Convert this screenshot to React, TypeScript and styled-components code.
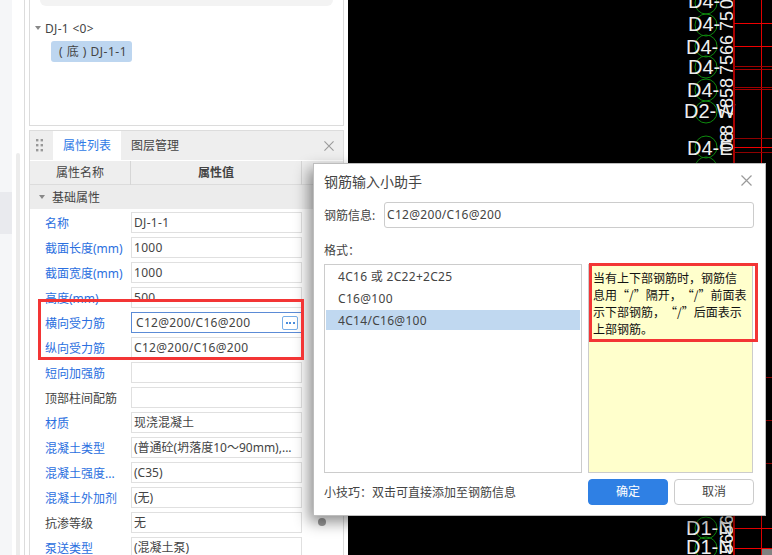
import React from "react";
import styled, { createGlobalStyle } from "styled-components";

const Global = createGlobalStyle`
  html, body { margin: 0; padding: 0; background: #fff; }
  * { box-sizing: border-box; }
  body { font-family: "Noto Sans", "Noto Sans CJK SC", "Liberation Sans", sans-serif; font-size: 12px; color: #333; }
`;

const Page = styled.div`
  position: relative; width: 772px; height: 555px; overflow: hidden; display: flex; background: #fff;
`;
const Sidebar = styled.div`
  width: 25px; flex: none; display: flex; border-right: 1px solid #dcdcdc;
`;
const Rail = styled.div`
  width: 12px; background: #f5f6f8; padding-top: 192px;
`;
const RailBand = styled.div`
  height: 42px; background: #e9eaee;
`;
const ScrollTrack = styled.div`
  width: 12px; padding: 153px 0 0 4px;
`;
const ScrollThumb = styled.div`
  width: 4px; height: 402px; background: #ececec; border-radius: 2px 2px 0 0;
`;
const Middle = styled.div`
  width: 323px; flex: none; padding: 0 4px 0 4px; display: flex; flex-direction: column;
`;
const TreePanel = styled.div`
  height: 126px; flex: none; border: 1px solid #dcdcdc; border-top: none; padding: 0 10px;
`;
const SearchPill = styled.div`
  height: 6px; background: #f3f3f3; border-radius: 0 0 10px 10px;
`;
const TreeHead = styled.div`
  display: flex; align-items: center; gap: 3px; margin: 14px 0 0 -5px; height: 16px; font-size: 12px; color: #444;
  letter-spacing: 0.3px;
`;
const Caret = styled.span`
  width: 0; height: 0; border-left: 3.5px solid transparent; border-right: 3.5px solid transparent;
  border-top: 4px solid #888; margin-right: 1px;
`;
const TreeItem = styled.div`
  margin: 5px 0 0 11px; width: 81px; height: 21px; line-height: 21px; background: #bdd6f0; border-radius: 3px;
  padding-left: 8px; font-size: 12px; color: #444; white-space: nowrap; letter-spacing: 0.5px;
`;
const AttrPanel = styled.div`
  margin-top: 4px; flex: 1; min-height: 0; border: 1px solid #dcdcdc; border-bottom: none; overflow: hidden;
`;
const TabBar = styled.div`
  height: 29px; background: #eeeeee; display: flex; align-items: stretch; position: relative;
`;
const Grip = styled.svg`
  width: 7px; height: 14px; align-self: center; margin: 0 10px 0 6px; flex: none;
`;
const Tab = styled.div<{ $active?: boolean }>`
  width: 68px; text-align: center; line-height: 29px; font-size: 12px;
  background: ${(p) => (p.$active ? "#fff" : "transparent")};
  color: ${(p) => (p.$active ? "#2e7ae6" : "#444")};
`;
const PanelClose = styled.svg`
  width: 10px; height: 10px; align-self: center; margin-left: auto; margin-right: 9px; flex: none;
`;
const HeaderRow = styled.div`
  margin-top: 1px; height: 24px; background: #eeeeee; display: grid; grid-template-columns: 101px 171px 1fr;
  border-bottom: 1px solid #dcdcdc;
`;
const HeaderCell = styled.div<{ $bold?: boolean }>`
  text-align: center; line-height: 24px; font-size: 12px; color: #444; border-right: 1px solid #d6d6d6;
  font-weight: ${(p) => (p.$bold ? 600 : 400)};
`;
const GroupRow = styled.div`
  height: 24px; background: #ececec; display: flex; align-items: center; padding-left: 9px; gap: 6px; color: #444;
`;
const Rows = styled.div`
  position: relative; padding-top: 1px;
`;
const Row = styled.div`
  height: 25px; display: grid; grid-template-columns: 101px 171px; align-items: center;
`;
const RowLabel = styled.div<{ $link?: boolean }>`
  padding-left: 15px; font-size: 12px; white-space: nowrap; color: ${(p) => (p.$link ? "#2b6fe0" : "#444")};
`;
const RowValue = styled.div<{ $active?: boolean }>`
  height: 21px; line-height: 19px; border: 1px solid ${(p) => (p.$active ? "#5b8bd6" : "#e0e0e0")};
  padding-left: ${(p) => (p.$active ? "4px" : "2px")}; color: #444; font-size: 12px; white-space: nowrap; overflow: hidden;
  display: flex; align-items: center; justify-content: space-between;
`;
const Latin = styled.span`
  letter-spacing: 0.3px;
`;
const MoreButton = styled.span`
  width: 16px; height: 14px; margin-right: 3px; border: 1px solid #78aee8; border-radius: 2px; color: #2e7ae6;
  display: flex; align-items: center; justify-content: center; gap: 1.5px;
`;
const Dot = styled.i`
  width: 2px; height: 2px; background: #4a8ddc; display: block;
`;
const Knob = styled.span`
  position: absolute; left: 288px; top: 309px; width: 8px; height: 8px; border-radius: 50%; background: #9a9a9a;
`;
const Canvas = styled.div`
  flex: 1; background: #000;
`;
const CanvasSvg = styled.svg`
  display: block; width: 424px; height: 555px;
`;
const Dialog = styled.div`
  position: absolute; left: 313px; top: 163px; width: 453px; height: 353px; background: #fff;
  border: 1px solid #bdbdbd; box-shadow: -4px 6px 14px rgba(0,0,0,.45); padding: 0 11px 0 10px;
  display: flex; flex-direction: column;
`;
const TitleBar = styled.div`
  height: 38px; flex: none; padding-bottom: 5px; display: flex; align-items: center; justify-content: space-between; font-size: 14px; color: #444;
`;
const DialogClose = styled.svg`
  width: 11px; height: 11px; margin-right: 2px;
`;
const InfoRow = styled.div`
  display: flex; align-items: center; height: 26px; flex: none; color: #444;
`;
const InfoLabel = styled.div`
  width: 60px; flex: none; font-size: 12px;
`;
const InfoInput = styled.div`
  flex: 1; height: 26px; line-height: 24px; border: 1px solid #ccc; border-radius: 3px; padding-left: 2px; font-size: 12px; color: #444;
  letter-spacing: 0.3px;
`;
const FormatLabel = styled.div`
  margin-top: 15px; height: 16px; line-height: 16px; color: #444; font-size: 12px;
`;
const Columns = styled.div`
  margin-top: 5px; height: 209px; flex: none; display: grid; grid-template-columns: 258px 165px; gap: 6px;
`;
const FormatList = styled.div`
  border: 1px solid #ccc; padding: 1px; font-size: 12px; color: #444; letter-spacing: 0.3px;
`;
const FormatItem = styled.div<{ $selected?: boolean }>`
  height: 20px; line-height: 22px; margin-bottom: 2px; padding-left: 12px;
  background: ${(p) => (p.$selected ? "#c0d8f0" : "transparent")};
`;
const TipBox = styled.div`
  background: #ffffcc; border: 1px solid #ccc; padding: 4px 4px; font-size: 12px; line-height: 17px; color: #111;
  font-family: "Noto Sans CJK SC", "Noto Sans", sans-serif;
  text-spacing-trim: space-all; font-feature-settings: "palt" 0, "halt" 0, "chws" 0;
`;
const Footer = styled.div`
  margin-top: 6px; display: flex; align-items: center; justify-content: space-between; color: #444; font-size: 12px;
`;
const Buttons = styled.div`
  display: flex; gap: 6px;
`;
const Button = styled.div<{ $primary?: boolean }>`
  width: 80px; height: 26px; line-height: 24px; text-align: center; border-radius: 4px; font-size: 12px;
  background: ${(p) => (p.$primary ? "#2f80e4" : "#fff")}; color: ${(p) => (p.$primary ? "#fff" : "#444")};
  border: 1px solid ${(p) => (p.$primary ? "#2f80e4" : "#ccc")};
`;
const Highlight = styled.div<{ $l: number; $t: number; $w: number; $h: number }>`
  position: absolute; left: ${(p) => p.$l}px; top: ${(p) => p.$t}px; width: ${(p) => p.$w}px; height: ${(p) => p.$h}px;
  border: 3px solid #f33535; pointer-events: none;
`;

const rows: { label: string; value: string; link?: boolean; active?: boolean }[] = [
  { label: "名称", value: "DJ-1-1", link: true },
  { label: "截面长度(mm)", value: "1000", link: true },
  { label: "截面宽度(mm)", value: "1000", link: true },
  { label: "高度(mm)", value: "500", link: true },
  { label: "横向受力筋", value: "C12@200/C16@200", link: true, active: true },
  { label: "纵向受力筋", value: "C12@200/C16@200", link: true },
  { label: "短向加强筋", value: "", link: true },
  { label: "顶部柱间配筋", value: "" },
  { label: "材质", value: "现浇混凝土", link: true },
  { label: "混凝土类型", value: "(普通砼(坍落度10～90mm),...", link: true },
  { label: "混凝土强度...", value: "(C35)", link: true },
  { label: "混凝土外加剂", value: "(无)", link: true },
  { label: "抗渗等级", value: "无" },
  { label: "泵送类型", value: "(混凝土泵)", link: true },
];

const labels: [string, number, number][] = [
  ["D4-", 688, 8], ["D4-", 688, 31], ["D4-", 686, 54], ["D4-", 688, 74], ["D4-", 687, 97], ["D2-W", 684, 118], ["D4-E", 687, 155],
  ["D1-N", 686, 535], ["D1-N", 686, 554],
];
const circles: [number, number][] = [
  [706, 3], [706, 25], [706, 46], [706, 67], [706, 90], [706, 112], [706, 147], [706, 168], [706, 528], [706, 548],
];
const vertical: [string, number, number][] = [
  ["0", 733, 9], ["75", 733, 31], ["66", 733, 55], ["75", 733, 75], ["58", 733, 98], ["78", 733, 118], ["8", 733, 135], ["08", 733, 152],
  ["56", 733, 535], ["56", 733, 554],
];
const hLines: [number, string][] = [
  [23, "#f00000"], [46, "#f00000"], [66, "#a00000"], [69, "#a00000"], [87, "#a00000"], [89, "#a00000"], [138, "#900000"], [147, "#f00000"], [152, "#900000"],
  [377, "#900000"], [420, "#900000"], [463, "#900000"], [528, "#f00000"], [548, "#f00000"],
];

function CadDrawing() {
  return (
    <CanvasSvg viewBox="348 0 424 555" xmlns="http://www.w3.org/2000/svg">
      {circles.map(([x, y], i) => (
        <circle key={i} cx={x} cy={y} r={11} fill="none" stroke="#0e8a0e" strokeWidth={1} />
      ))}
      {labels.map(([t, x, y], i) => (
        <text key={i} x={x} y={y} fill="#eee" fontSize={20} fontFamily="Liberation Sans, sans-serif">{t}</text>
      ))}
      {vertical.map(([t, x, y], i) => (
        <text key={i} transform={`translate(${x} ${y}) rotate(-90)`} fill="#eee" fontSize={18} fontFamily="Liberation Sans, sans-serif">{t}</text>
      ))}
      <line x1={734} y1={0} x2={734} y2={555} stroke="#a80000" strokeWidth={2} />
      <line x1={761.5} y1={0} x2={761.5} y2={555} stroke="#e00000" strokeWidth={1} />
      {hLines.map(([y, c], i) => (
        <line key={i} x1={734} y1={y + 0.5} x2={772} y2={y + 0.5} stroke={c} strokeWidth={1} />
      ))}
      <rect x={762} y={549} width={10} height={6} fill="#808080" />
    </CanvasSvg>
  );
}

const CloseIcon = () => (
  <path d="M0.5 0.5 L10.5 10.5 M10.5 0.5 L0.5 10.5" stroke="#9a9a9a" strokeWidth={1.2} fill="none" />
);

export default function App() {
  return (
    <Page>
      <Global />
      <Sidebar>
        <Rail><RailBand /></Rail>
        <ScrollTrack><ScrollThumb /></ScrollTrack>
      </Sidebar>
      <Middle>
        <TreePanel>
          <SearchPill />
          <TreeHead><Caret />DJ-1 &lt;0&gt;</TreeHead>
          <TreeItem>( 底 ) DJ-1-1</TreeItem>
        </TreePanel>
        <AttrPanel>
          <TabBar>
            <Grip viewBox="0 0 7 14">
              {[0, 5, 10].map((y) => (
                <React.Fragment key={y}>
                  <rect x={0} y={y} width={2.4} height={2.4} fill="#999" />
                  <rect x={4.6} y={y} width={2.4} height={2.4} fill="#999" />
                </React.Fragment>
              ))}
            </Grip>
            <Tab $active>属性列表</Tab>
            <Tab>图层管理</Tab>
            <PanelClose viewBox="0 0 11 11"><CloseIcon /></PanelClose>
          </TabBar>
          <HeaderRow>
            <HeaderCell>属性名称</HeaderCell>
            <HeaderCell $bold>属性值</HeaderCell>
          </HeaderRow>
          <GroupRow><Caret />基础属性</GroupRow>
          <Rows>
            {rows.map((r) => (
              <Row key={r.label}>
                <RowLabel $link={r.link}>{r.label}</RowLabel>
                <RowValue $active={r.active}>
                  {/^[\w@/.-]+$/.test(r.value) ? <Latin>{r.value}</Latin> : r.value}
                  {r.active && <MoreButton><Dot /><Dot /><Dot /></MoreButton>}
                </RowValue>
              </Row>
            ))}
            <Knob />
          </Rows>
        </AttrPanel>
      </Middle>
      <Canvas><CadDrawing /></Canvas>
      <Dialog>
        <TitleBar>
          钢筋输入小助手
          <DialogClose viewBox="0 0 11 11"><CloseIcon /></DialogClose>
        </TitleBar>
        <InfoRow>
          <InfoLabel>钢筋信息:</InfoLabel>
          <InfoInput>C12@200/C16@200</InfoInput>
        </InfoRow>
        <FormatLabel>格式：</FormatLabel>
        <Columns>
          <FormatList>
            <FormatItem>4C16 或 2C22+2C25</FormatItem>
            <FormatItem>C16@100</FormatItem>
            <FormatItem $selected>4C14/C16@100</FormatItem>
          </FormatList>
          <TipBox>当有上下部钢筋时，钢筋信息用“/”隔开，“/”前面表示下部钢筋，“/”后面表示上部钢筋。</TipBox>
        </Columns>
        <Footer>
          小技巧：双击可直接添加至钢筋信息
          <Buttons>
            <Button $primary>确定</Button>
            <Button>取消</Button>
          </Buttons>
        </Footer>
      </Dialog>
      <Highlight $l={38} $t={299} $w={266} $h={61} />
      <Highlight $l={589} $t={263} $w={169} $h={79} />
    </Page>
  );
}
